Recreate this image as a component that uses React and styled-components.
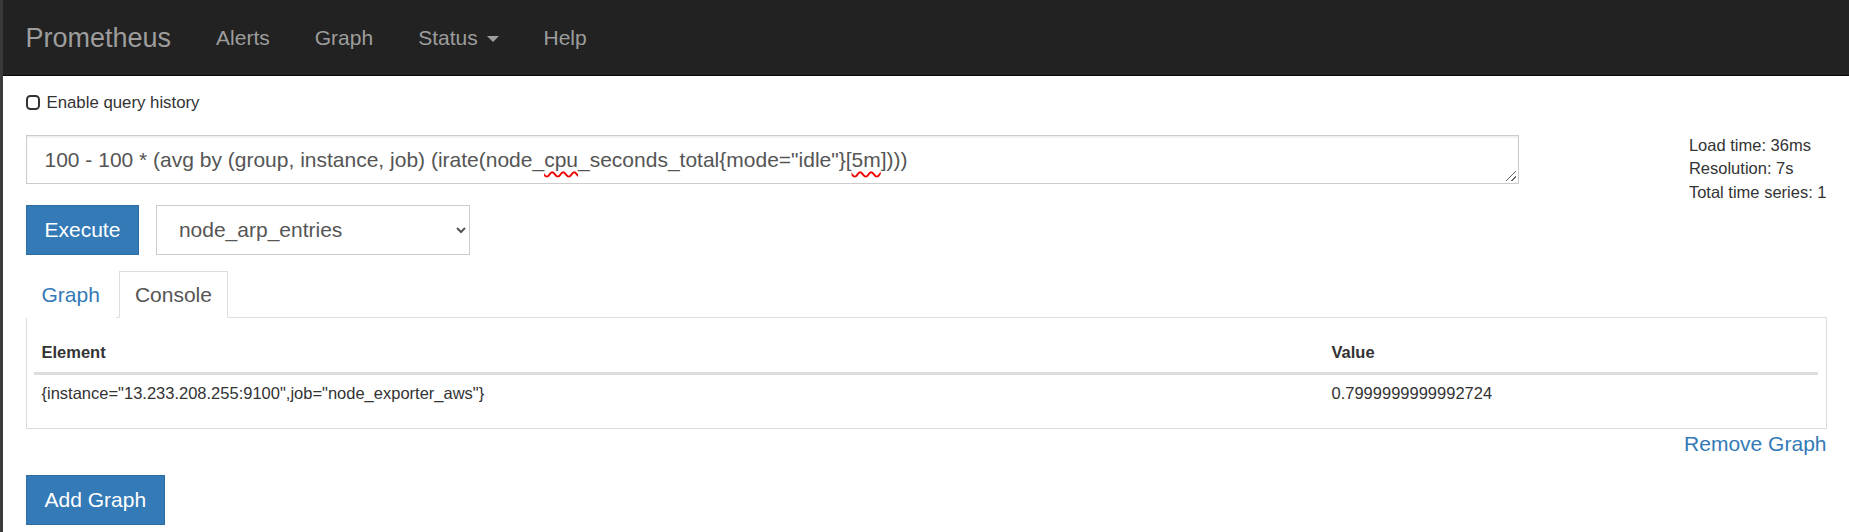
import React from 'react'
import styled, { createGlobalStyle } from 'styled-components'

const GlobalStyle = createGlobalStyle`
  * { box-sizing: border-box; }
  html, body { margin: 0; background: #fff; }
  body {
    min-height: 532px;
    border-left: 3px solid #3a3a3a;
    font-family: "Liberation Sans", Arial, Helvetica, sans-serif;
    font-size: 21px;
    line-height: 1.42857;
    color: #333;
  }
`

const Navbar = styled.nav`
  display: flex;
  height: 76px;
  background: #222;
  border-bottom: 1px solid #080808;
`

const Brand = styled.a`
  padding: 22.5px;
  font-size: 27px;
  line-height: 30px;
  color: #9d9d9d;
  text-decoration: none;
`

const NavLink = styled.a`
  padding: 22.5px;
  font-size: 21px;
  line-height: 30px;
  color: #9d9d9d;
  text-decoration: none;
`

const Caret = styled.span`
  display: inline-block;
  width: 0;
  height: 0;
  margin-left: 3px;
  vertical-align: middle;
  border-top: 6px solid #9d9d9d;
  border-left: 6px solid transparent;
  border-right: 6px solid transparent;
`

const Main = styled.main`
  padding: 15px 22.5px 0;
`

const HistoryRow = styled.label`
  display: flex;
  align-items: center;
  gap: 7px;
  font-size: 16.8px;
  line-height: 23.6px;
`

const CheckBox = styled.input`
  appearance: none;
  margin: 0;
  width: 14px;
  height: 15px;
  border: 2.5px solid #333;
  border-radius: 4.5px;
  background: #fff;
`

/* stats float beside the query box and hang below it */
const QueryRow = styled.div`
  display: flex;
  align-items: flex-start;
  height: 49.5px;
  margin-top: 20px;
`

const QueryBox = styled.div`
  position: relative;
  width: 1493px;
  height: 49.5px;
  padding: 9px 18px;
  border: 1.5px solid #ccc;
  box-shadow: inset 0 1.5px 1.5px rgba(0, 0, 0, 0.075);
  font-size: 21px;
  line-height: 30px;
  color: #555;
  white-space: nowrap;

  &::after {
    content: "";
    position: absolute;
    right: 2px;
    bottom: 2px;
    width: 10px;
    height: 10px;
    background: linear-gradient(
      135deg,
      transparent 0 46%,
      #666 46% 54%,
      transparent 54% 72%,
      #666 72% 80%,
      transparent 80%
    );
  }
`

const Misspelled = styled.span`
  text-decoration: underline wavy #e00;
  text-decoration-thickness: 1.5px;
  text-underline-offset: 4px;
  text-decoration-skip-ink: none;
`

const EvalStats = styled.div`
  margin-left: auto;
  margin-top: -1px;
  font-size: 16.5px;
  line-height: 23.6px;
  color: #333;
`

const ActionRow = styled.div`
  display: flex;
  gap: 16.5px;
  margin-top: 21px;
`

const PrimaryButton = styled.button`
  height: 49.5px;
  padding: 9px 18px;
  border: 1.5px solid #2e6da4;
  border-radius: 0;
  background: #337ab7;
  color: #fff;
  font-family: inherit;
  font-size: 21px;
  line-height: 30px;
`

const MetricSelect = styled.select`
  width: 314px;
  height: 49.5px;
  padding: 9px 18px;
  border: 1.5px solid #ccc;
  border-radius: 0;
  background: #fff;
  color: #555;
  font-family: inherit;
  font-size: 21px;
`

const Tabs = styled.div`
  display: flex;
  gap: 3px;
  margin-top: 16.5px;
  border-bottom: 1.5px solid #ddd;
`

const Tab = styled.a`
  margin-bottom: -1.5px;
  padding: 7.5px 15px;
  border: 1.5px solid ${p => (p.$active ? '#ddd' : 'transparent')};
  border-bottom-color: transparent;
  background: #fff;
  color: ${p => (p.$active ? '#555' : '#337ab7')};
  font-size: 21px;
  line-height: 30px;
  text-decoration: none;
`

const Panel = styled.div`
  padding: 15.5px 7.5px 15px;
  border: 1.5px solid #ddd;
  border-top: 0;
`

const Table = styled.table`
  width: 100%;
  border-collapse: collapse;
  font-size: 16.5px;
  line-height: 23.6px;
  color: #333;
`

const HeadCell = styled.th`
  padding: 7.5px;
  text-align: left;
  font-weight: bold;
  border-bottom: 3px solid #ddd;
`

const Cell = styled.td`
  padding: 7.5px;
`

const RemoveRow = styled.div`
  text-align: right;
  line-height: 30px;
`

const Link = styled.a`
  color: #337ab7;
  text-decoration: none;
`

const AddRow = styled.div`
  margin-top: 16px;
`

const App = () => {
  return (
    <>
      <GlobalStyle />
      <Navbar>
        <Brand href="#">Prometheus</Brand>
        <NavLink href="#">Alerts</NavLink>
        <NavLink href="#">Graph</NavLink>
        <NavLink href="#">Status <Caret /></NavLink>
        <NavLink href="#">Help</NavLink>
      </Navbar>
      <Main>
        <HistoryRow>
          <CheckBox type="checkbox" />
          Enable query history
        </HistoryRow>
        <QueryRow>
          <QueryBox>
            100 - 100 * (avg by (group, instance, job) (irate(node_<Misspelled>cpu</Misspelled>_seconds_total{'{'}mode="idle"{'}'}[<Misspelled>5m</Misspelled>])))
          </QueryBox>
          <EvalStats>
            <div>Load time: 36ms</div>
            <div>Resolution: 7s</div>
            <div>Total time series: 1</div>
          </EvalStats>
        </QueryRow>
        <ActionRow>
          <PrimaryButton>Execute</PrimaryButton>
          <MetricSelect defaultValue="node_arp_entries">
            <option value="node_arp_entries">node_arp_entries</option>
          </MetricSelect>
        </ActionRow>
        <Tabs>
          <Tab href="#">Graph</Tab>
          <Tab href="#" $active>Console</Tab>
        </Tabs>
        <Panel>
          <Table>
            <colgroup>
              <col />
              <col style={{ width: '494px' }} />
            </colgroup>
            <thead>
              <tr>
                <HeadCell>Element</HeadCell>
                <HeadCell>Value</HeadCell>
              </tr>
            </thead>
            <tbody>
              <tr>
                <Cell>{'{instance="13.233.208.255:9100",job="node_exporter_aws"}'}</Cell>
                <Cell>0.7999999999992724</Cell>
              </tr>
            </tbody>
          </Table>
        </Panel>
        <RemoveRow>
          <Link href="#">Remove Graph</Link>
        </RemoveRow>
        <AddRow>
          <PrimaryButton>Add Graph</PrimaryButton>
        </AddRow>
      </Main>
    </>
  )
}

export default App
